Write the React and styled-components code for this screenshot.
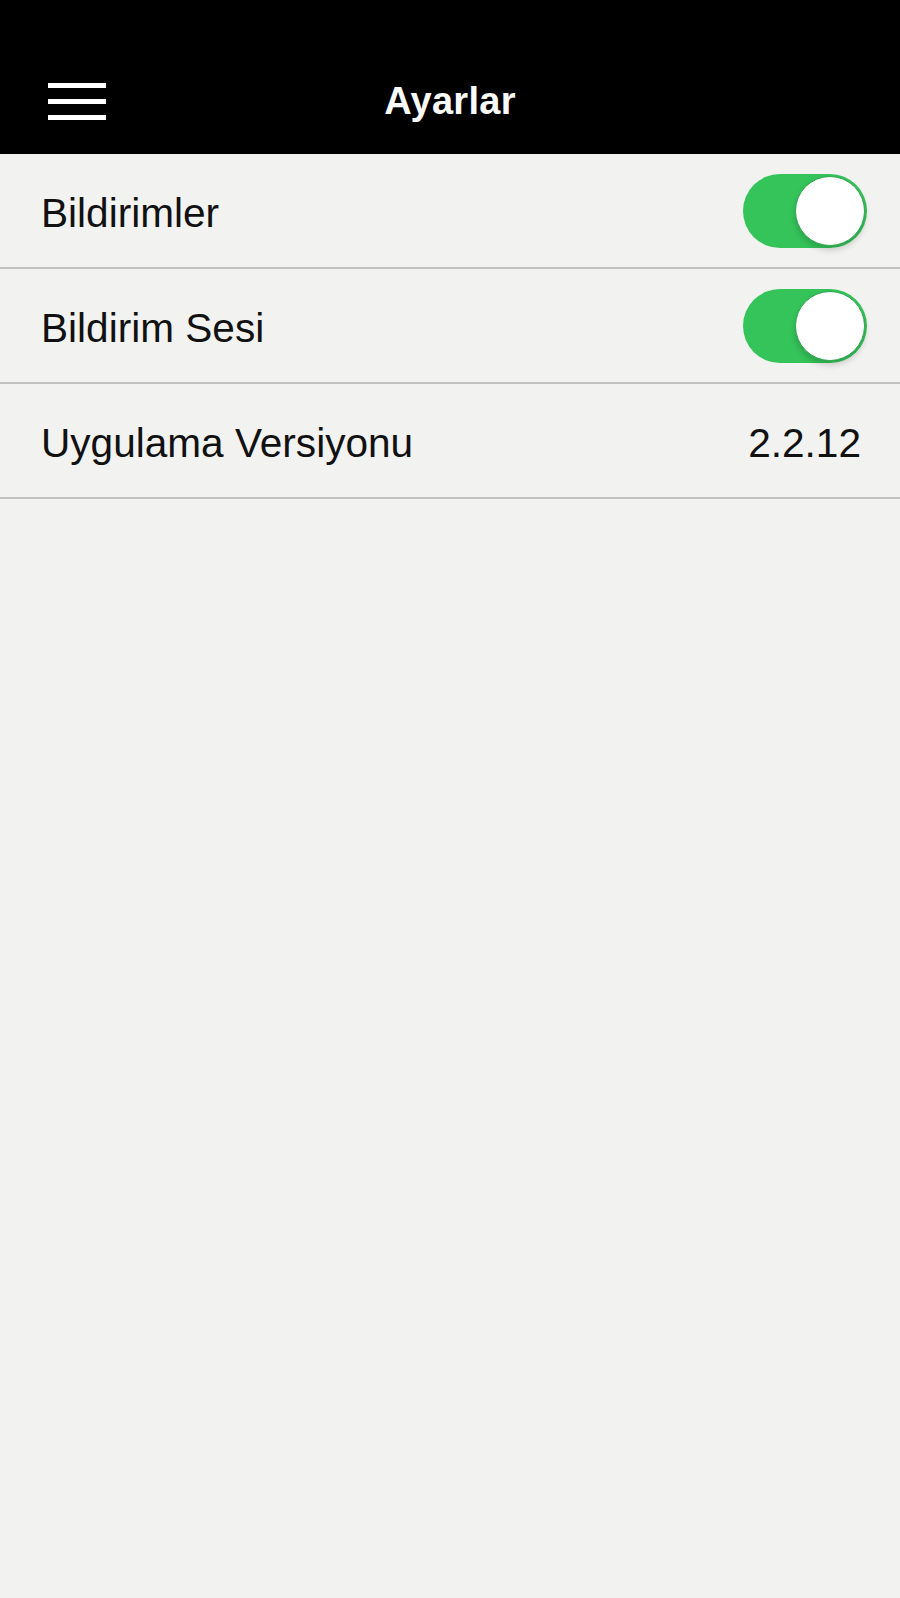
import React from 'react';
import styled, { createGlobalStyle } from 'styled-components';

const GlobalStyle = createGlobalStyle`
  html, body {
    margin: 0;
    padding: 0;
    background: #f2f2f1;
    font-family: "Liberation Sans", Arial, sans-serif;
  }
`;

const Page = styled.div`
  min-height: 1598px;
  background: #f2f2f1;
`;

const Header = styled.header`
  background: #000;
  height: 154px;
  padding-top: 48px;
  box-sizing: border-box;
`;

const NavBar = styled.div`
  height: 106px;
  display: grid;
  grid-template-columns: 120px 1fr 120px;
  align-items: center;
`;

const MenuButton = styled.button`
  background: none;
  border: 0;
  padding: 0 0 0 48px;
  display: flex;
  align-items: center;
  cursor: pointer;
`;

const Title = styled.h1`
  margin: 0;
  text-align: center;
  color: #fafafa;
  font-size: 38px;
  font-weight: 700;
  letter-spacing: 0.3px;
`;

const Row = styled.div`
  height: 113px;
  border-bottom: 2px solid #c2c2c2;
  display: flex;
  align-items: center;
  justify-content: space-between;
  padding: 0 ${({ $right }) => $right}px 0 41px;
`;

const Label = styled.span`
  font-size: 40.6px;
  color: #111;
  padding-top: 5px;
`;

const Value = styled(Label)``;

const Track = styled.button`
  width: 124px;
  height: 74px;
  border-radius: 37px;
  border: 0;
  padding: 0 2px;
  background: ${({ $on }) => ($on ? '#35c45a' : '#e3e3e3')};
  display: flex;
  align-items: center;
  justify-content: ${({ $on }) => ($on ? 'flex-end' : 'flex-start')};
  cursor: pointer;
`;

const Knob = styled.span`
  width: 68px;
  height: 68px;
  border-radius: 50%;
  background: #fff;
  border: 1px solid #2fa84e;
  box-shadow: 0 4px 6px rgba(0, 0, 0, 0.18);
`;

const MenuIcon = () => (
  <svg width="58" height="40" viewBox="0 0 58 40">
    <rect x="0" y="2" width="58" height="5" fill="#fff" />
    <rect x="0" y="18" width="58" height="5" fill="#fff" />
    <rect x="0" y="34" width="58" height="5" fill="#fff" />
  </svg>
);

const Toggle = ({ on }) => (
  <Track $on={on} aria-pressed={on}>
    <Knob />
  </Track>
);

export default function App() {
  return (
    <Page>
      <GlobalStyle />
      <Header>
        <NavBar>
          <MenuButton aria-label="menu">
            <MenuIcon />
          </MenuButton>
          <Title>Ayarlar</Title>
          <div />
        </NavBar>
      </Header>
      <Row $right={33}>
        <Label>Bildirimler</Label>
        <Toggle on />
      </Row>
      <Row $right={33}>
        <Label>Bildirim Sesi</Label>
        <Toggle on />
      </Row>
      <Row $right={39}>
        <Label>Uygulama Versiyonu</Label>
        <Value>2.2.12</Value>
      </Row>
    </Page>
  );
}
